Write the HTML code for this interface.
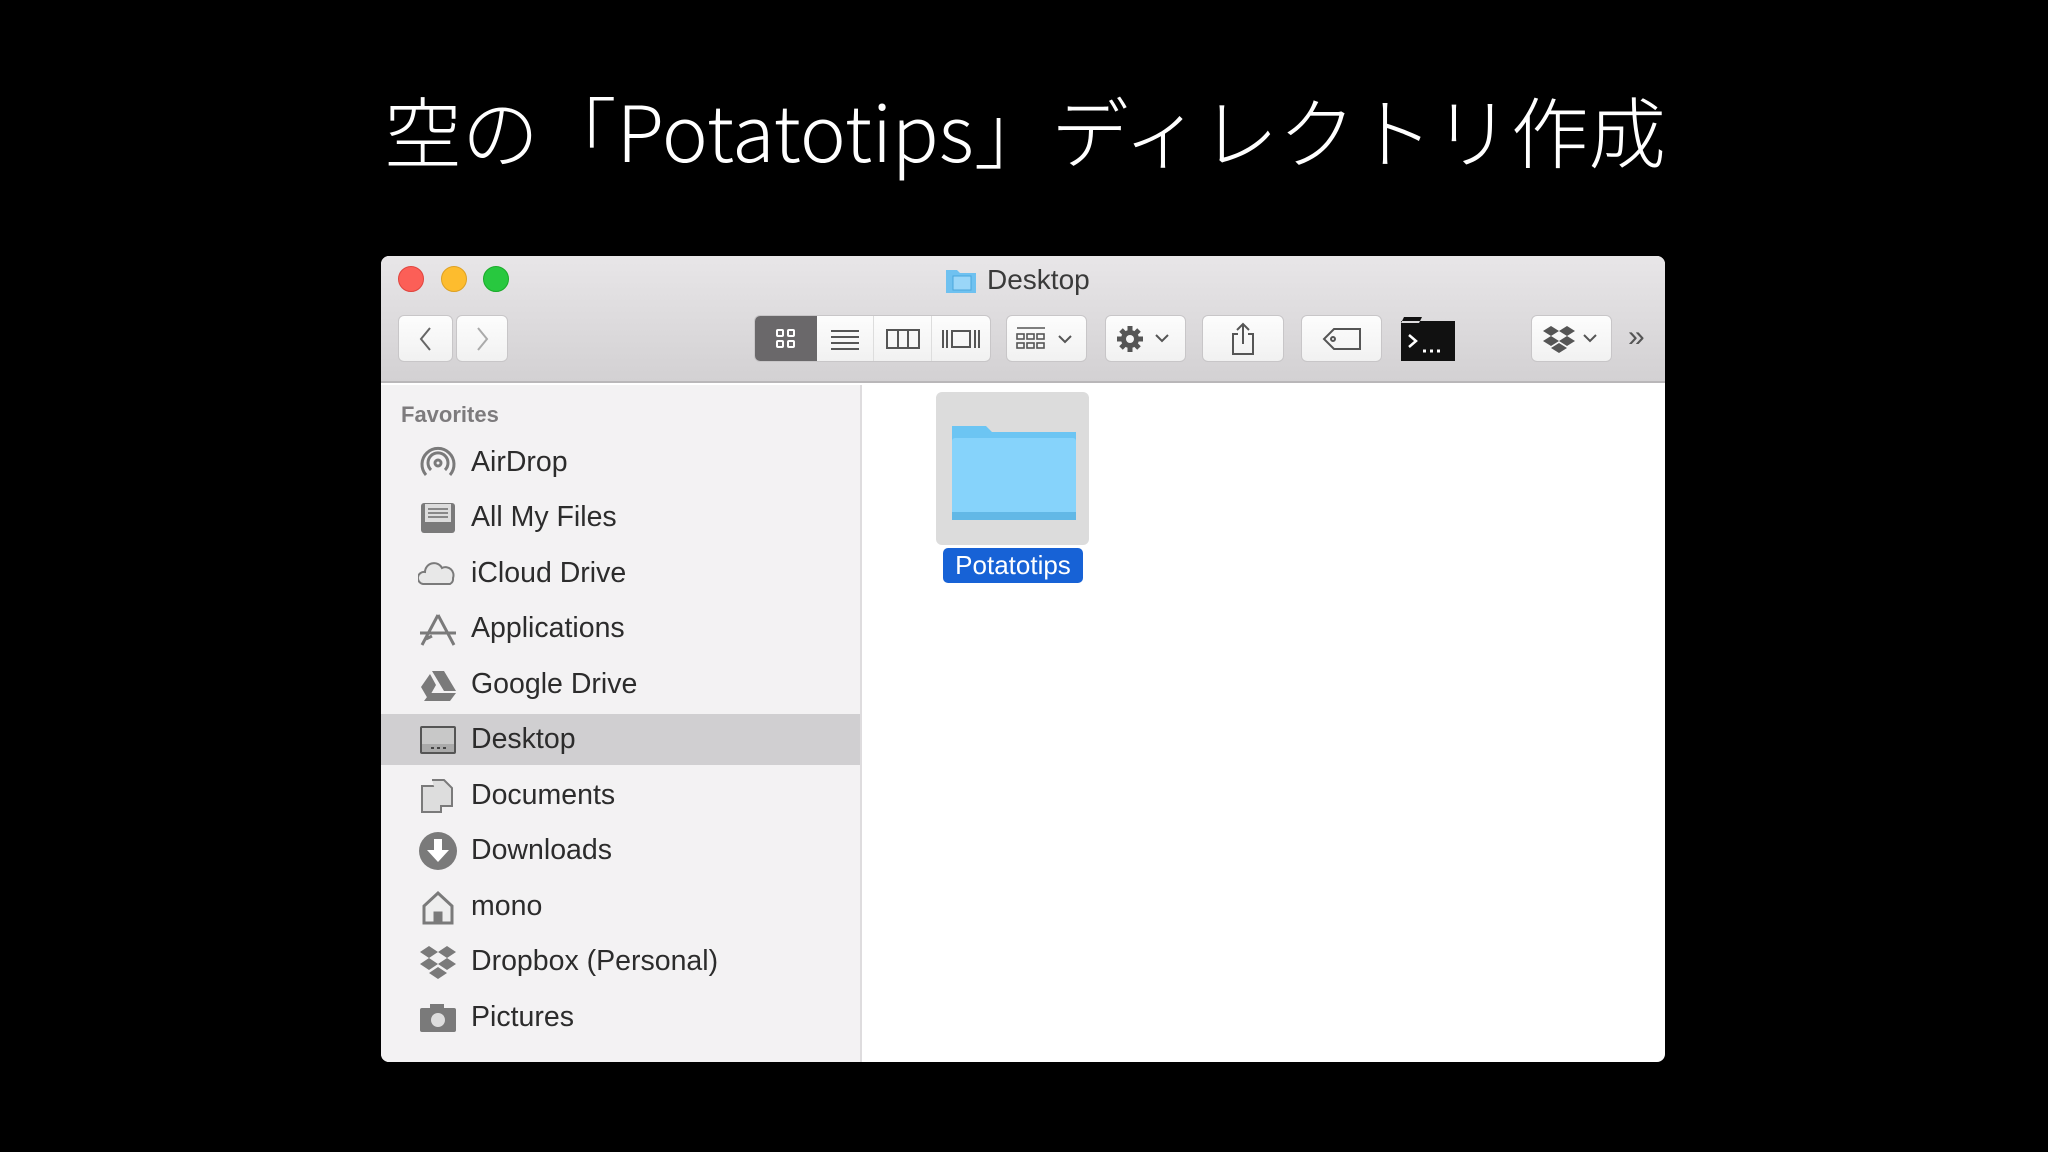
<!DOCTYPE html>
<html><head><meta charset="utf-8"><style>
*{margin:0;padding:0;box-sizing:border-box}
body{width:2048px;height:1152px;background:#000;position:relative;overflow:hidden;font-family:"Liberation Sans","Noto Sans CJK JP",sans-serif}
.title{position:absolute;left:378px;top:73px;width:1294px;text-align:center;color:#fff;font-size:77.5px;font-family:"Noto Sans CJK JP","Liberation Sans",sans-serif;font-weight:300;white-space:nowrap}
.win{position:absolute;left:381px;top:256px;width:1284px;height:806px;background:#fff;border-radius:8px;overflow:hidden}
.bar{position:absolute;left:0;top:0;width:100%;height:127px;background:linear-gradient(#e8e6e8,#d3d1d3);border-bottom:2px solid #b9b7b9}
.btn{position:absolute;top:59px;height:47px;background:linear-gradient(#fdfdfd,#f1f1f1);border:1px solid #c8c6c8;border-radius:6px;display:flex;align-items:center;justify-content:center}
.side{position:absolute;left:0;top:129px;width:481px;height:677px;background:#f3f2f3;border-right:2px solid #dedcde}
.row{position:absolute;left:0;width:479px;height:51px;font-size:28.5px;color:#2c2c2c;display:flex;align-items:center}
.row span{position:absolute;left:90px}
.row svg{position:absolute;left:37px}
</style></head><body>
<div class="title">空の「Potatotips」ディレクトリ作成</div>
<div class="win">
 <div class="bar">
  <div style="position:absolute;left:17px;top:10px;width:26px;height:26px;border-radius:50%;background:#fc5f57;border:1px solid #e0443e"></div>
  <div style="position:absolute;left:60px;top:10px;width:26px;height:26px;border-radius:50%;background:#fdbc2e;border:1px solid #dea123"></div>
  <div style="position:absolute;left:102px;top:10px;width:26px;height:26px;border-radius:50%;background:#28c83f;border:1px solid #1aab29"></div>
  <svg style="position:absolute;left:564px;top:10px" width="32" height="28"><path d="M1 4h11l3 3h16v20H1z" fill="#6fc1f0"/><rect x="8" y="10" width="18" height="14" fill="#9ad6f8" stroke="#4aa6dc"/></svg>
  <div style="position:absolute;left:606px;top:8px;font-size:28px;color:#3a3a3a">Desktop</div>
  <div class="btn" style="left:17px;width:55px"><svg width="20" height="30"><path d="M14 4L5 15l9 11" stroke="#666" stroke-width="2" fill="none"/></svg></div>
  <div class="btn" style="left:75px;width:52px"><svg width="20" height="30"><path d="M6 4l9 11-9 11" stroke="#aaa" stroke-width="2" fill="none"/></svg></div>
  <div class="btn" style="left:373px;width:237px;justify-content:flex-start;overflow:hidden">
   <div style="width:62px;height:47px;background:#6a686a;display:flex;align-items:center;justify-content:center"><svg width="22" height="22" fill="none" stroke="#fff" stroke-width="2"><rect x="2" y="2" width="6" height="6" rx="1"/><rect x="13" y="2" width="6" height="6" rx="1"/><rect x="2" y="13" width="6" height="6" rx="1"/><rect x="13" y="13" width="6" height="6" rx="1"/></svg></div>
   <div style="width:58px;height:47px;display:flex;align-items:center;justify-content:center;border-right:1px solid #ddd"><svg width="30" height="22" stroke="#555" stroke-width="2"><path d="M1 3h28M1 9h28M1 15h28M1 21h28"/></svg></div>
   <div style="width:58px;height:47px;display:flex;align-items:center;justify-content:center;border-right:1px solid #ddd"><svg width="34" height="22" fill="none" stroke="#555" stroke-width="2"><rect x="1" y="2" width="32" height="18"/><path d="M12 2v18M22 2v18"/></svg></div>
   <div style="width:58px;height:47px;display:flex;align-items:center;justify-content:center"><svg width="40" height="22" fill="none" stroke="#555" stroke-width="2"><path d="M2 2v18M6 2v18M34 2v18M38 2v18"/><rect x="11" y="3" width="18" height="16"/></svg></div>
  </div>
  <div class="btn" style="left:625px;width:81px"><svg width="64" height="26" fill="none" stroke="#555" stroke-width="1.6"><path d="M2 2h28"/><rect x="2" y="8" width="7" height="5"/><rect x="12" y="8" width="7" height="5"/><rect x="22" y="8" width="7" height="5"/><rect x="2" y="17" width="7" height="5"/><rect x="12" y="17" width="7" height="5"/><rect x="22" y="17" width="7" height="5"/><path d="M44 10l6 6 6-6" stroke-width="2"/></svg></div>
  <div class="btn" style="left:724px;width:81px"><svg width="64" height="30"><circle cx="16" cy="15" r="9" fill="#555"/><g stroke="#555" stroke-width="5"><path d="M16 2v26M3 15h26M7 6l18 18M25 6L7 24"/></g><circle cx="16" cy="15" r="4" fill="#f5f5f5"/><path d="M42 11l6 6 6-6" stroke="#555" stroke-width="2" fill="none"/></svg></div>
  <div class="btn" style="left:821px;width:82px"><svg width="26" height="34" fill="none" stroke="#555" stroke-width="2"><path d="M8 12H3v20h20V12h-5M13 22V2M7 8l6-6 6 6"/></svg></div>
  <div class="btn" style="left:920px;width:81px"><svg width="40" height="24" fill="none" stroke="#555" stroke-width="2"><path d="M12 2h26v20H12L2 12z"/><circle cx="11" cy="12" r="2"/></svg></div>
  <svg style="position:absolute;left:1020px;top:59px" width="54" height="46"><path d="M0 8h18l3-6h-18zM0 6h54v40H0z" fill="#111"/><path d="M8 20l7 6-7 6" stroke="#fff" stroke-width="2.5" fill="none"/><path d="M22 36h3M29 36h3M36 36h3" stroke="#fff" stroke-width="3"/></svg>
  <div class="btn" style="left:1150px;width:81px"><svg width="64" height="30"><g fill="#555"><path d="M11 2l8 5-8 5-8-5zM27 2l8 5-8 5-8-5zM11 12l8 5-8 5-8-5zM27 12l8 5-8 5-8-5zM19 19l8 5-8 5-8-5z"/></g><path d="M44 11l6 6 6-6" stroke="#555" stroke-width="2" fill="none"/></svg></div>
  <div style="position:absolute;left:1247px;top:64px;font-size:30px;color:#555">»</div>
 </div>
 <div class="side">
  <div style="position:absolute;left:20px;top:17px;font-size:22px;color:#7d7b7d;font-weight:bold">Favorites</div>
  <div class="row" style="top:52px"><svg width="40" height="36" fill="none" stroke="#7a7a7a" stroke-width="3"><path d="M8 30A16 16 0 1 1 32 30M13 25A10 10 0 1 1 27 25"/><circle cx="20" cy="18" r="3"/></svg><span>AirDrop</span></div>
  <div class="row" style="top:107px"><svg width="40" height="36"><rect x="3" y="3" width="34" height="30" rx="3" fill="#7a7a7a"/><rect x="7" y="4" width="26" height="18" fill="#ddd"/><path d="M10 9h20M10 13h20M10 17h20" stroke="#888" stroke-width="2"/></svg><span>All My Files</span></div>
  <div class="row" style="top:163px"><svg width="40" height="36"><path d="M5 28a6 6 0 0 1 2-12 9 9 0 0 1 17-4 8 8 0 0 1 11 10 6 6 0 0 1-3 6z" fill="#e8e8e8" stroke="#7a7a7a" stroke-width="2"/></svg><span>iCloud Drive</span></div>
  <div class="row" style="top:218px"><svg width="40" height="36" stroke="#7a7a7a" stroke-width="3" fill="none"><path d="M4 34L20 4M20 4l16 30M2 22h36M8 28l6-3"/></svg><span>Applications</span></div>
  <div class="row" style="top:274px"><svg width="40" height="36" fill="#7a7a7a"><path d="M14 4h12l12 20H26zM12 7l6 11-8 14-7-12zM12 26h26l-6 8H6z"/></svg><span>Google Drive</span></div>
  <div class="row" style="top:329px;background:#d0cfd1"><svg width="40" height="36"><rect x="2" y="4" width="36" height="28" rx="2" fill="#555"/><rect x="4" y="6" width="32" height="24" fill="#c8c8c8"/><rect x="4" y="22" width="32" height="8" fill="#aaa"/><path d="M13 26h3M19 26h3M25 26h3" stroke="#444" stroke-width="2"/></svg><span>Desktop</span></div>
  <div class="row" style="top:385px"><svg width="40" height="36" fill="#ddd" stroke="#7a7a7a" stroke-width="2"><path d="M4 8h14l5 5v21H4z"/><path d="M14 2h12l8 8v18H22"/></svg><span>Documents</span></div>
  <div class="row" style="top:440px"><svg width="40" height="40"><circle cx="20" cy="20" r="19" fill="#7a7a7a"/><path d="M16 8h8v11h7L20 31 9 19h7z" fill="#fff"/></svg><span>Downloads</span></div>
  <div class="row" style="top:496px"><svg width="40" height="36" fill="#eee" stroke="#7a7a7a" stroke-width="3"><path d="M6 34V17L20 4l14 13v17z"/><rect x="17" y="24" width="6" height="10" fill="#7a7a7a"/></svg><span>mono</span></div>
  <div class="row" style="top:551px"><svg width="40" height="36" fill="#7a7a7a"><path d="M11 2l9 6-9 6-9-6zM29 2l9 6-9 6-9-6zM11 14l9 6-9 6-9-6zM29 14l9 6-9 6-9-6zM20 23l9 6-9 6-9-6z"/></svg><span>Dropbox (Personal)</span></div>
  <div class="row" style="top:607px"><svg width="40" height="36"><rect x="2" y="8" width="36" height="24" rx="2" fill="#7a7a7a"/><rect x="12" y="4" width="14" height="6" fill="#7a7a7a"/><circle cx="20" cy="20" r="8" fill="#ddd" stroke="#7a7a7a" stroke-width="2"/></svg><span>Pictures</span></div>
 </div>
 <div style="position:absolute;left:555px;top:136px;width:153px;height:153px;background:#dcdcdc;border-radius:6px"></div>
 <svg style="position:absolute;left:565px;top:160px" width="135" height="110"><path d="M6 10h34l6 6h84v88H6z" fill="#6cc5f3"/><rect x="6" y="22" width="124" height="82" rx="3" fill="#86d3fb"/><rect x="6" y="96" width="124" height="8" fill="#62b8e6"/></svg>
 <div style="position:absolute;left:562px;top:292px;width:140px;height:35px;background:#1762d6;border-radius:5px;color:#fff;font-size:26px;text-align:center;line-height:35px">Potatotips</div>
</div>
</body></html>
